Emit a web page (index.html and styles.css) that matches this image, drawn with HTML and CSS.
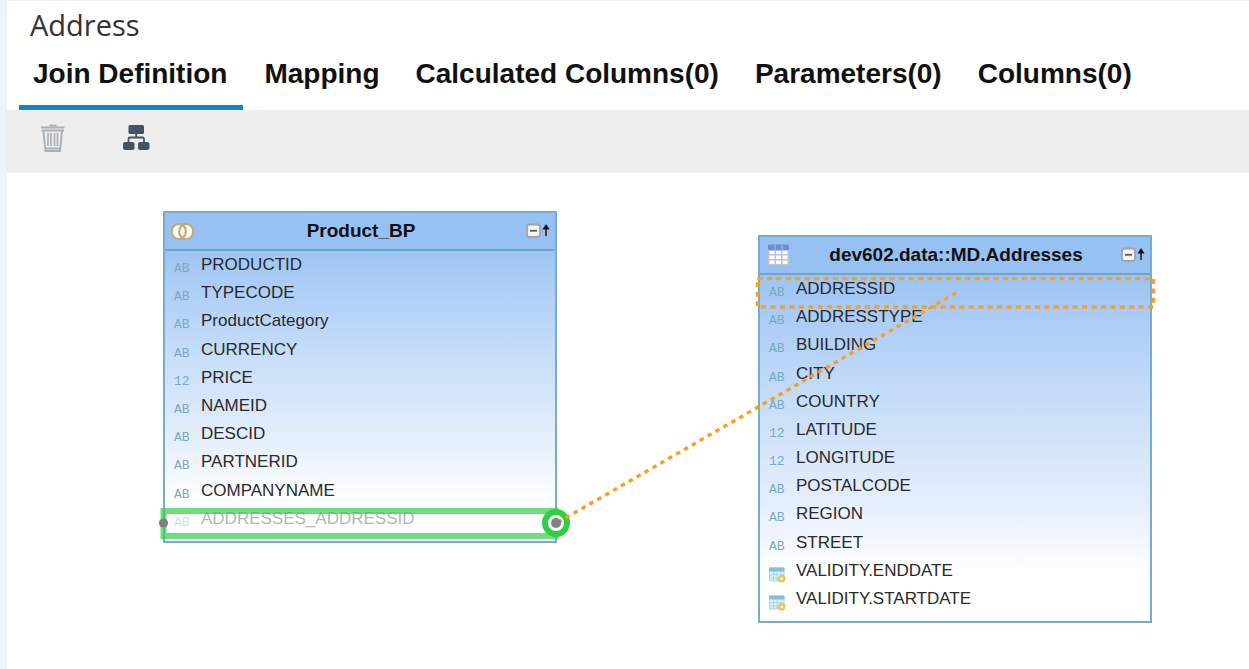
FILE: index.html
```html
<!DOCTYPE html>
<html lang="en">
<head>
<meta charset="utf-8">
<title>Address</title>
<link rel="stylesheet" href="styles.css">
</head>
<body>
<svg class="defs" width="0" height="0" aria-hidden="true">
  <symbol id="calendar" viewBox="0 0 17 16">
    <rect x="0" y="0.5" width="15.5" height="14" rx="1" fill="#a4d8e4"/>
    <rect x="0" y="0.5" width="15.5" height="3.5" rx="1" fill="#84c2d2"/>
    <path d="M1.2 5h2.8v2.3H1.2zM5 5h2.6v2.3H5zM8.6 5h2.6v2.3H8.6zM12.2 5h2.2v2.3h-2.2zM1.2 8.3h2.8v2.3H1.2zM5 8.3h2.6v2.3H5zM8.6 8.3h2.6v2.3H8.6zM1.2 11.5h2.8v2H1.2zM5 11.5h2.6v2H5z" fill="#dcf2f7"/>
    <circle cx="12.8" cy="11.8" r="2.6" fill="#fff3d8" stroke="#f6bd54" stroke-width="2.200"/>
  </symbol>
  <symbol id="collapse" viewBox="0 0 24 16">
    <rect x="1" y="1.500" width="13" height="12.500" rx="2.500" fill="#f3f3f3" stroke="#a3a3a3" stroke-width="1.800"/>
    <path d="M4 7.800h7" stroke="#5d5d5d" stroke-width="1.8"/>
    <path d="M20 3v10" stroke="#333" stroke-width="1.8"/>
    <path d="M16.400 6.600 20 1l3.600 5.600z" fill="#111"/>
  </symbol>
</svg>
<div class="app">
  <header class="head">
    <h1 class="title">Address</h1>
    <nav class="tabs" role="tablist">
      <button class="tab tab-active" role="tab" aria-selected="true">Join Definition</button>
      <button class="tab" role="tab">Mapping</button>
      <button class="tab" role="tab">Calculated Columns(0)</button>
      <button class="tab" role="tab">Parameters(0)</button>
      <button class="tab" role="tab">Columns(0)</button>
    </nav>
  </header>
  <div class="toolbar" role="toolbar">
    <button class="tool" aria-label="Delete">
      <svg width="28" height="30" viewBox="0 0 28 30" fill="none" stroke="#a9b0b6">
        <path d="M10.500 2.500h7" stroke-width="2"/>
        <path d="M2 4.500h23.500M2.500 7.500h22.500" stroke-width="2"/>
        <path d="M4.500 8 6.500 28h14.500L23 8" stroke-width="2"/>
        <path d="M6.500 25.500h14.500" stroke-width="2"/>
        <path d="M9 10v13M12 10v13M15.500 10v13M18.500 10v13" stroke-width="1.700"/>
      </svg>
    </button>
    <button class="tool" aria-label="Auto layout">
      <svg width="28" height="30" viewBox="0 0 28 30" fill="#435463">
        <rect x="5.500" y="2" width="15.500" height="9" rx="1.500"/>
        <rect x="0" y="19" width="11.500" height="8" rx="2"/>
        <rect x="15" y="19" width="11.500" height="8" rx="2"/>
        <path d="M13.200 11v3.500M5.500 19v-3q0-1.500 1.500-1.500h12.500q1.500 0 1.500 1.500v3" fill="none" stroke="#435463" stroke-width="1.800"/>
      </svg>
    </button>
  </div>
  <main class="canvas">
    <section class="node node-product">
      <header class="node-head">
        <svg class="node-icon" width="26" height="20" viewBox="0 0 26 20" fill="#fffdf6">
          <ellipse cx="8.800" cy="10.500" rx="7" ry="7.700"/><ellipse cx="16.200" cy="10.500" rx="7" ry="7.700"/>
          <g fill="none" stroke="#c0ab79" stroke-width="2.200"><ellipse cx="8.800" cy="10.500" rx="7" ry="7.700"/><ellipse cx="16.200" cy="10.500" rx="7" ry="7.700"/></g>
        </svg>
        <h2 class="node-title">Product_BP</h2>
        <button class="collapse" aria-label="Collapse Product_BP"><svg width="24" height="16"><use href="#collapse"/></svg></button>
      </header>
      <ul class="fields">
        <li class="field"><span class="type">AB</span><span class="name">PRODUCTID</span></li>
        <li class="field"><span class="type">AB</span><span class="name">TYPECODE</span></li>
        <li class="field"><span class="type">AB</span><span class="name">ProductCategory</span></li>
        <li class="field"><span class="type">AB</span><span class="name">CURRENCY</span></li>
        <li class="field"><span class="type">12</span><span class="name">PRICE</span></li>
        <li class="field"><span class="type">AB</span><span class="name">NAMEID</span></li>
        <li class="field"><span class="type">AB</span><span class="name">DESCID</span></li>
        <li class="field"><span class="type">AB</span><span class="name">PARTNERID</span></li>
        <li class="field"><span class="type">AB</span><span class="name">COMPANYNAME</span></li>
        <li class="field field-dragged"><span class="type">AB</span><span class="name">ADDRESSES_ADDRESSID</span></li>
      </ul>
    </section>
    <section class="node node-address">
      <header class="node-head">
        <svg class="node-icon" width="26" height="22" viewBox="0 0 26 22">
          <rect x="3" y="0.500" width="21" height="20.500" rx="1" fill="#b9c3d8"/>
          <rect x="3" y="0.500" width="21" height="5.500" rx="1" fill="#6b90d3"/>
          <path d="M10 1v5M17 1v5" stroke="#a9c3ee"/>
          <path d="M4.500 7h5v3h-5zM11 7h5v3h-5zM17.500 7h5v3h-5zM4.500 11.500h5v3.500h-5zM11 11.500h5v3.500h-5zM17.500 11.500h5v3.500h-5zM4.500 16.500h5v3.500h-5zM11 16.500h5v3.500h-5zM17.500 16.500h5v3.500h-5z" fill="#fff"/>
        </svg>
        <h2 class="node-title">dev602.data::MD.Addresses</h2>
        <button class="collapse" aria-label="Collapse dev602.data::MD.Addresses"><svg width="24" height="16"><use href="#collapse"/></svg></button>
      </header>
      <ul class="fields">
        <li class="field"><span class="type">AB</span><span class="name">ADDRESSID</span></li>
        <li class="field"><span class="type">AB</span><span class="name">ADDRESSTYPE</span></li>
        <li class="field"><span class="type">AB</span><span class="name">BUILDING</span></li>
        <li class="field"><span class="type">AB</span><span class="name">CITY</span></li>
        <li class="field"><span class="type">AB</span><span class="name">COUNTRY</span></li>
        <li class="field"><span class="type">12</span><span class="name">LATITUDE</span></li>
        <li class="field"><span class="type">12</span><span class="name">LONGITUDE</span></li>
        <li class="field"><span class="type">AB</span><span class="name">POSTALCODE</span></li>
        <li class="field"><span class="type">AB</span><span class="name">REGION</span></li>
        <li class="field"><span class="type">AB</span><span class="name">STREET</span></li>
        <li class="field"><svg class="type" width="17" height="16"><use href="#calendar"/></svg><span class="name">VALIDITY.ENDDATE</span></li>
        <li class="field"><svg class="type" width="17" height="16"><use href="#calendar"/></svg><span class="name">VALIDITY.STARTDATE</span></li>
      </ul>
    </section>
    <svg class="links" width="1242" height="496" viewBox="7 173 1242 496" fill="none" aria-hidden="true">
      <rect x="163.500" y="511" width="392" height="25" stroke="#30cf48" stroke-opacity="0.700" stroke-width="6"/>
      <circle cx="556" cy="523" r="11" fill="#fff" stroke="#2fce43" stroke-width="6"/>
      <path d="M757.500 278.500H1153.500V307H757.500z" stroke="#f3a02c" stroke-width="3.500" stroke-dasharray="5 4.440"/>
      <path d="M956 293 556 523.500" stroke="#fb9f1e" stroke-width="3.400" stroke-dasharray="4.500 4.600"/>
      <circle cx="163.500" cy="523" r="4.600" fill="#808080"/>
      <circle cx="556" cy="523" r="5" fill="#808080"/>
    </svg>
  </main>
</div>
</body>
</html>
```
FILE: styles.css
```css
* { box-sizing: border-box; }

body {
  margin: 0;
  font-family: "Liberation Sans", Arial, sans-serif;
  color: #2a2a2a;
  background: #fefefe;
}

button {
  border: 0;
  padding: 0;
  background: none;
  font: inherit;
  color: inherit;
  cursor: pointer;
}

.defs { position: absolute; }

.app {
  display: flex;
  flex-direction: column;
  min-height: 100vh;
  border-left: 7px solid #eff2f9;
  border-top: 1px solid #f1f2fa;
}

.title {
  margin: 0;
  padding: 5px 23px 0;
  font: 400 29px/38px "Open Sans", "Noto Sans", sans-serif;
  color: #333;
}

.tabs {
  display: flex;
  gap: 8px;
  padding: 0 12px;
}

.tab {
  height: 66px;
  padding: 0 14px 2px;
  border-bottom: 5px solid transparent;
  font-size: 28px;
  line-height: 32px;
  font-weight: 700;
  color: #111;
  white-space: nowrap;
}

.tab-active {
  padding-right: 16px;
  margin-right: -1px;
  border-bottom-color: #1084c7;
}

.toolbar {
  display: flex;
  gap: 56px;
  height: 63px;
  padding: 13px 32px;
  background: #eee;
}

.tool { width: 28px; height: 30px; }

.tool svg, .collapse svg { display: block; }

.canvas {
  position: relative;
  flex: 1;
}

.node {
  position: absolute;
  display: flex;
  flex-direction: column;
  width: 394px;
  border: 2px solid #74aecb;
  background: linear-gradient(#98c1f3 0%, #9fc5f5 12%, #c3dbf8 40%, #e6effc 70%, #fff 88%);
}

.node-product {
  left: 156px;
  top: 38px;
  height: 332px;
}

.node-address {
  left: 751px;
  top: 62px;
  height: 388px;
}

.node-head {
  display: flex;
  align-items: center;
  height: 38px;
  padding: 0 5px;
  border-bottom: 2px solid #68a7cc;
  background: #98c1f3;
}

.node-icon { flex: none; }

.node-title {
  flex: 1;
  margin: 0;
  font-size: 19px;
  line-height: 24px;
  font-weight: 700;
  text-align: center;
  color: #111;
}

.collapse { width: 24px; height: 16px; }

.fields {
  display: grid;
  flex: 1;
  grid-auto-rows: 1fr;
  margin: 0;
  padding: 4px 0;
  list-style: none;
}

.field {
  display: grid;
  grid-template-columns: 27px 1fr;
  align-items: center;
  padding-left: 9px;
}

.type {
  font: 400 13px/16px "Liberation Mono", monospace;
  color: #78abc2;
}

.name {
  padding-bottom: 8px;
  font-size: 17px;
  line-height: 20px;
}

.field-dragged { opacity: 0.35; }

.links {
  position: absolute;
  left: 0;
  top: 0;
  pointer-events: none;
}
```
